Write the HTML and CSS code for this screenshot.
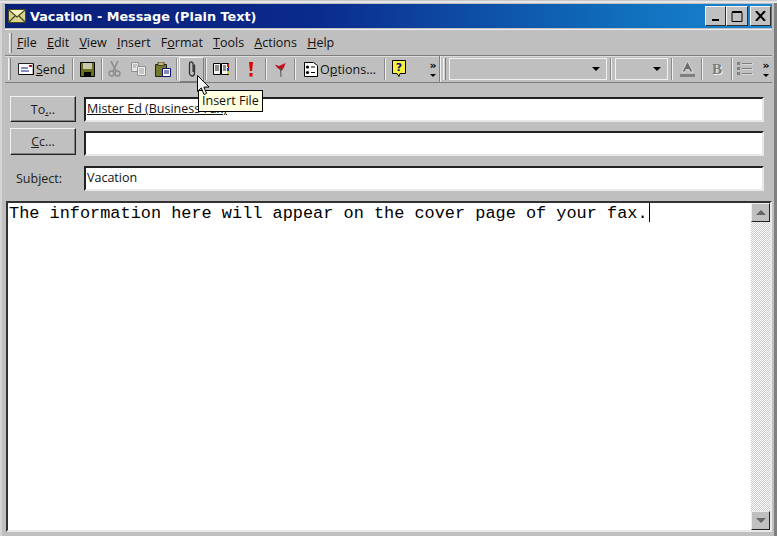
FILE: index.html
```html
<!DOCTYPE html>
<html lang="en">
<head>
<meta charset="utf-8">
<title>Vacation - Message (Plain Text)</title>
<link rel="stylesheet" href="styles.css">
</head>
<body>
<div class="window">
  <header class="titlebar">
    <svg class="app-icon" width="18" height="14" viewBox="0 0 18 14"><rect x=".5" y=".5" width="17" height="13" fill="#d8d48c" stroke="#4a4a20"/><path d="M1 1l8 7 8-7M1 13l6-6M17 13l-6-6" fill="none" stroke="#44441c" stroke-width="1.2"/><path d="M2 1h14L9 7z" fill="#f4f0c0"/></svg>
    <span class="title-text">Vacation - Message (Plain Text)</span>
    <div class="win-btns">
      <span class="win-btn win-min"><svg width="10" height="10" viewBox="0 0 10 10"><rect x="1" y="8" width="7" height="2"/></svg></span>
      <span class="win-btn win-max"><svg width="12" height="11" viewBox="0 0 12 11"><path d="M1 1.500h10v9H1z" fill="none" stroke="#000"/><rect x="1" y="0" width="10" height="2"/></svg></span>
      <span class="win-btn win-close"><svg width="11" height="10" viewBox="0 0 11 10"><path d="M1 0l9 10M10 0l-9 10" stroke="#000" stroke-width="2" fill="none"/></svg></span>
    </div>
  </header>

  <nav class="menubar">
    <span class="gripper"></span>
    <span class="menu-item"><u>F</u>ile</span>
    <span class="menu-item"><u>E</u>dit</span>
    <span class="menu-item"><u>V</u>iew</span>
    <span class="menu-item"><u>I</u>nsert</span>
    <span class="menu-item">F<u>o</u>rmat</span>
    <span class="menu-item"><u>T</u>ools</span>
    <span class="menu-item"><u>A</u>ctions</span>
    <span class="menu-item"><u>H</u>elp</span>
  </nav>

  <div class="toolbars">
    <div class="toolbar toolbar-main">
      <span class="gripper"></span>
      <span class="tool tool-send">
        <svg width="16" height="12" viewBox="0 0 16 12"><path d="M.5.500h15v11H.5z" fill="#fff" stroke="#222"/><path d="M15.500 1v11H1" fill="none" stroke="#000" stroke-width="1.500"/><path d="M3 5h7M3 8h8" stroke="#12128a"/><rect x="11" y="2" width="3" height="2" fill="#c01020"/></svg>
        <span><u>S</u>end</span>
      </span>
      <span class="sep"></span>
      <span class="tool tool-save">
        <svg width="15" height="15" viewBox="0 0 15 15"><path d="M.5.500h14v14H.5z" fill="#6a7020" stroke="#000"/><rect x="3" y="1" width="9" height="6" fill="#c8c8b0"/><rect x="4" y="10" width="7" height="5" fill="#000"/></svg>
      </span>
      <span class="sep"></span>
      <span class="tool tool-cut">
        <svg width="13" height="16" viewBox="0 0 13 16"><path d="M3 0l5 10M10 0L5 10" stroke="#8c8c8c" stroke-width="1.600" fill="none"/><circle cx="3.500" cy="12.500" r="2.500" fill="none" stroke="#8c8c8c" stroke-width="1.400"/><circle cx="9.500" cy="12.500" r="2.500" fill="none" stroke="#8c8c8c" stroke-width="1.400"/></svg>
      </span>
      <span class="tool tool-copy">
        <svg width="15" height="14" viewBox="0 0 15 14"><path d="M.5.500h7v9h-7z" fill="#e8e8e8" stroke="#909090"/><path d="M6.500 4.500h8v9h-8z" fill="#f0f0f0" stroke="#909090"/><path d="M8 7h5M8 9h5M8 11h5M2 3h4M2 5h3" stroke="#9c9c9c"/></svg>
      </span>
      <span class="tool tool-paste">
        <svg width="16" height="15" viewBox="0 0 16 15"><path d="M.5 2.500h11v12H.5z" fill="#747a2c" stroke="#222"/><rect x="3" y="0" width="6" height="3.500" fill="#c8b070" stroke="#222" stroke-width=".7"/><path d="M7.500 6.500h8v8h-8z" fill="#fff" stroke="#10107a"/><path d="M9 9h5M9 11h5" stroke="#10107a"/></svg>
      </span>
      <span class="sep"></span>
      <span class="tool tool-attach">
        <svg width="10" height="16" viewBox="0 0 10 16"><path d="M7.500 3.500v8.500a2.500 3 0 0 1-5 0V3a1.800 2 0 0 1 3.600 0v8" fill="none" stroke="#333" stroke-width="1.300"/></svg>
      </span>
      <span class="sep"></span>
      <span class="tool tool-book">
        <svg width="16" height="14" viewBox="0 0 16 14"><path d="M.5 1.500h7v11h-7zM8.500 1.500h7v11h-7z" fill="#f4f4f0" stroke="#000"/><path d="M2 4h4M2 6h4M2 8h4M10 4h3M10 6h3M10 8h3" stroke="#222"/><path d="M15 2v3" stroke="#c01818" stroke-width="2"/><path d="M15 6v3" stroke="#2030b0" stroke-width="2"/><path d="M15 9v3" stroke="#d8c020" stroke-width="2"/></svg>
      </span>
      <span class="sep"></span>
      <span class="tool tool-important">
        <svg width="6" height="15" viewBox="0 0 6 15"><path d="M1 0h4L4 9H2z" fill="#e00000"/><rect x="1.500" y="11" width="3" height="3.500" fill="#e00000"/></svg>
      </span>
      <span class="sep"></span>
      <span class="tool tool-flag">
        <svg width="11" height="15" viewBox="0 0 11 15"><path d="M0 2.500L4 4l6.500-3L9 5.500 6.500 9 2 5.500z" fill="#c01020"/><path d="M5.500 6l.5 9" stroke="#555"/></svg>
      </span>
      <span class="sep"></span>
      <span class="tool tool-options">
        <svg width="14" height="15" viewBox="0 0 14 15"><path d="M.5.500h9l4 3v11H.5z" fill="#fff" stroke="#000"/><circle cx="3.500" cy="5" r="1.600"/><circle cx="3.500" cy="10.500" r="1.600"/><path d="M7 5h4M7 10.500h4" stroke="#000"/></svg>
        <span>O<u>p</u>tions...</span>
      </span>
      <span class="sep"></span>
      <span class="tool tool-help">
        <svg width="14" height="18" viewBox="0 0 14 18"><path d="M.5.500h13v13H8l-1 3-2-3H.5z" fill="#f6f040" stroke="#000"/><text x="7" y="11" text-anchor="middle" class="help-mark">?</text></svg>
      </span>
      <span class="chevrons"><span class="chev">»</span><span class="chev-arrow"></span></span>
    </div>
    <div class="toolbar toolbar-format">
      <span class="gripper"></span>
      <span class="combo combo-font"><span class="combo-arrow"></span></span>
      <span class="sep"></span>
      <span class="combo combo-size"><span class="combo-arrow"></span></span>
      <span class="sep"></span>
      <span class="tool tool-color">
        <svg width="17" height="18" viewBox="0 0 17 18"><path d="M8.500 1L14 12h-3l-1-2.500H7L6 12H3z" fill="#6c6c6c" stroke="#f0f0f0" stroke-width=".7"/><rect x="1" y="14" width="15" height="3" fill="#808080"/></svg>
      </span>
      <span class="sep"></span>
      <span class="tool tool-bold">B</span>
      <span class="sep"></span>
      <span class="tool tool-list">
        <svg width="16" height="15" viewBox="0 0 16 15"><path d="M5 2h11M5 7h11M5 12h11" stroke="#f0f0f0"/><path d="M5 1.500h10M5 6.500h10M5 11.500h10" stroke="#808080"/><rect x="0" y="0" width="3" height="3" fill="#808080"/><rect x="0" y="5" width="3" height="3" fill="#808080"/><rect x="0" y="10" width="3" height="3" fill="#808080"/></svg>
      </span>
      <span class="chevrons"><span class="chev">»</span><span class="chev-arrow"></span></span>
    </div>
  </div>

  <section class="fields">
    <div class="field-row row-to">
      <button class="addr-btn" type="button">To<u>.</u>..</button>
      <div class="field"><span class="recipient">Mister Ed (Business Fax)</span></div>
    </div>
    <div class="field-row row-cc">
      <button class="addr-btn" type="button"><u>C</u>c...</button>
      <div class="field"></div>
    </div>
    <div class="field-row row-subject">
      <label class="subject-label">Subject:</label>
      <div class="field">Vacation</div>
    </div>
  </section>

  <main class="message">
    <div class="message-text">The information here will appear on the cover page of your fax.<span class="caret"></span></div>
    <div class="scrollbar">
      <span class="scroll-btn"><span class="arrow-up"></span></span>
      <span class="scroll-track"></span>
      <span class="scroll-btn"><span class="arrow-down"></span></span>
    </div>
  </main>

  <div class="tooltip">Insert File</div>
  <svg class="cursor" width="13" height="21" viewBox="0 0 13 21"><path d="M.5.500v16l3.800-3.600 2.700 6.600 2.600-1.100-2.700-6.300h5.200z" fill="#f4f4f4" stroke="#000"/></svg>
</div>
</body>
</html>
```

FILE: styles.css
```css
* { box-sizing: border-box; }
html, body { margin: 0; padding: 0; }
body { width: 777px; height: 536px; overflow: hidden; background: #c0c0c0; }

.window {
  position: relative;
  width: 777px;
  height: 536px;
  padding: 3px 5px 0 5px;
  background: #bfbfbf;
  border-top: 1px solid #c8c8c8;
  box-shadow: inset 0 2px 0 #e6e6e6, inset 2px 0 0 #d4d4d4, inset -3px 0 0 #808080;
  font-family: "Open Sans", "Noto Sans", sans-serif;
  font-size: 12.500px;
  color: #111;
  display: flex;
  flex-direction: column;
}

/* title bar */
.titlebar {
  height: 24px;
  flex: none;
  display: flex;
  align-items: center;
  padding-left: 3px;
  background: linear-gradient(90deg, #0a1f78 0%, #0a2a8c 40%, #106ebc 80%, #1a86d4 100%);
  color: #fff;
}
.app-icon { flex: none; }
.title-text {
  margin-left: 4px;
  padding-top: 1px;
  font-family: "DejaVu Sans", sans-serif;
  font-weight: 700;
  font-size: 12.800px;
  white-space: nowrap;
}
.win-btns { margin-left: auto; display: flex; margin-right: 1px; }
.win-btn {
  height: 20px;
  display: flex;
  align-items: center;
  justify-content: center;
  background: #c0c0c0;
  border: 1px solid;
  border-color: #f4f4f4 #303030 #303030 #f4f4f4;
}
.win-min { width: 21px; }
.win-max { width: 22px; }
.win-close { width: 21px; margin-left: 2px; }

/* menu bar */
.menubar {
  height: 26px;
  margin-top: 1px;
  flex: none;
  display: flex;
  align-items: center;
  border-top: 1px solid #f0f0f0;
  padding-left: 4px;
}
.menu-item { white-space: nowrap; margin-right: 10.200px; line-height: 20px; }
.gripper {
  flex: none;
  width: 3px;
  height: 20px;
  margin-right: 5px;
  background: #cfcfcf;
  border-left: 1px solid #f4f4f4;
  border-right: 1px solid #7c7c7c;
}

/* toolbars */
.toolbars { height: 28px; flex: none; display: flex; border-top: 1px solid #7e7e7e; border-bottom: 1px solid #7e7e7e; box-shadow: inset 0 1px 0 #dcdcdc; }
.toolbar { display: flex; align-items: center; height: 26px; padding-left: 3px; }
.toolbar-main { flex: none; width: 435px; border-right: 1px solid #808080; box-shadow: 1px 0 0 #f0f0f0; }
.toolbar-format { flex: 1; min-width: 0; }
.toolbar .gripper { margin-right: 0; height: 22px; }

.tool { flex: none; display: flex; align-items: center; justify-content: center; height: 24px; gap: 2px; white-space: nowrap; font-size: 12.500px; }
.sep { flex: none; width: 2px; height: 22px; background: linear-gradient(90deg, #8a8a8a 50%, #efefef 50%); }
.tool-send { width: 61px; }
.tool-save { width: 27px; }
.tool-cut { width: 23px; }
.tool-copy { width: 24px; }
.tool-paste { width: 26px; }
.tool-attach { width: 25px; height: 25px; margin: 0 1px; border: 1px solid; border-color: #f0f0f0 #7c7c7c #7c7c7c #f0f0f0; }
.tool-book { width: 28px; }
.tool-important { width: 28px; }
.tool-flag { width: 27px; }
.tool-options { width: 88px; }
.tool-help { width: 32px; justify-content: flex-start; padding-left: 6px; }
.help-mark { font-family: "DejaVu Sans", sans-serif; font-weight: 700; font-size: 11px; fill: #10107a; }

.chevrons { margin-left: auto; width: 12px; display: flex; flex-direction: column; align-items: center; gap: 4px; }
.chev { font-family: "DejaVu Sans", sans-serif; font-size: 11px; font-weight: 700; line-height: 8px; color: #000; }
.chev-arrow { display: block; width: 0; height: 0; border: 3px solid transparent; border-top-color: #000; border-bottom-width: 0; }

.combo { flex: none; display: flex; align-items: center; justify-content: flex-end; height: 22px; border: 1px solid #efefef; padding-right: 6px; margin: 0 3px 0 4px; }
.combo-font { width: 158px; margin-left: 3px; }
.combo-size { width: 53px; margin-left: 3px; }
.combo-arrow { display: block; width: 0; height: 0; border: 4px solid transparent; border-top-color: #000; border-bottom-width: 0; }
.tool-color { width: 28px; }
.tool-bold { width: 28px; font-family: "Liberation Serif", serif; font-weight: 700; font-size: 15px; color: #7c7c7c; text-shadow: 1px 1px 0 #f0f0f0; }
.tool-list { width: 24px; }

/* address fields */
.fields { flex: none; padding: 13px 4px 0 5px; display: flex; flex-direction: column; }
.field-row { display: flex; align-items: flex-start; }
.row-to { height: 27px; }
.row-to .field { margin-top: 1px; }
.row-cc { height: 28px; margin-top: 5px; }
.row-cc .addr-btn { height: 27px; }
.row-cc .field { margin-top: 3px; }
.row-subject { height: 25px; margin-top: 10px; align-items: center; }
.addr-btn {
  flex: none;
  width: 66px;
  height: 26px;
  padding: 0;
  background: #c0c0c0;
  font: inherit;
  font-size: 12.500px;
  color: #222;
  border: 1px solid;
  border-color: #f2f2f2 #222 #222 #f2f2f2;
  box-shadow: inset -1px -1px 0 #808080;
}
.field {
  margin-left: 8px;
  width: 680px;
  height: 25px;
  padding: 0 0 0 1px;
  line-height: 19px;
  background: #fff;
  border: 2px solid;
  border-color: #222 #e8e8e8 #e8e8e8 #222;
  white-space: nowrap;
  overflow: hidden;
}
.recipient { text-decoration: underline; }
.subject-label { flex: none; width: 66px; padding-left: 6px; color: #222; }

/* message body */
.message {
  flex: none;
  width: 766px;
  height: 331px;
  margin: 10px 0 0 1px;
  display: flex;
  background: #fff;
  border: 2px solid;
  border-color: #333 #eaeaea #eaeaea #333;
}
.message-text {
  flex: 1;
  padding: 0 0 0 1px;
  font-family: "Liberation Mono", monospace;
  font-size: 16.900px;
  line-height: 20px;
  color: #000;
  white-space: nowrap;
}
.caret { display: inline-block; width: 1px; height: 19px; background: #000; vertical-align: -4px; margin-left: 1px; }
.scrollbar {
  flex: none;
  width: 19px;
  display: flex;
  flex-direction: column;
  background: repeating-conic-gradient(#c8c8c8 0 25%, #fff 0 50%) 0 0 / 2px 2px;
}
.scroll-btn {
  flex: none;
  height: 19px;
  display: flex;
  align-items: center;
  justify-content: center;
  background: #c0c0c0;
  border: 1px solid;
  border-color: #ececec #222 #222 #ececec;
}
.scroll-track { flex: 1; }
.arrow-up { width: 0; height: 0; border: 5px solid transparent; border-bottom-color: #666; border-top-width: 0; }
.arrow-down { width: 0; height: 0; border: 5px solid transparent; border-top-color: #666; border-bottom-width: 0; }

/* overlays */
.tooltip {
  position: absolute;
  left: 198px;
  top: 89px;
  width: 65px;
  height: 22px;
  background: #ffffe1;
  border: 1px solid #000;
  font-size: 12.500px;
  line-height: 20px;
  padding-left: 3px;
  white-space: nowrap;
  color: #111;
}
.cursor { position: absolute; left: 197px; top: 74px; }
```
